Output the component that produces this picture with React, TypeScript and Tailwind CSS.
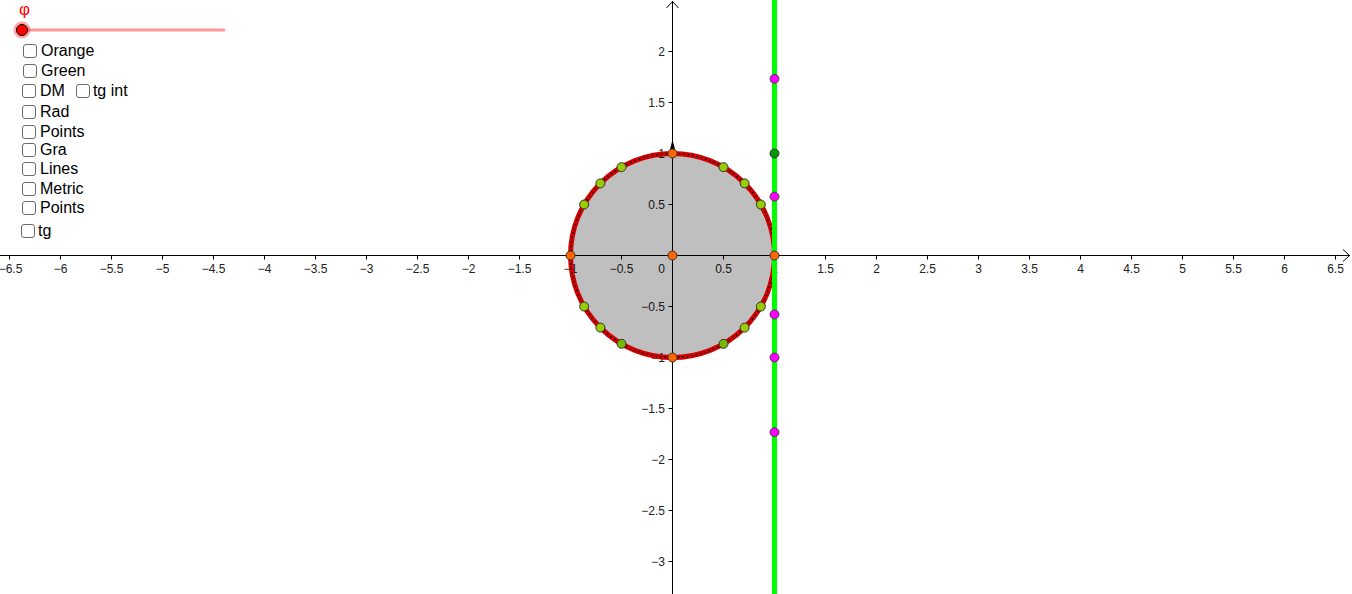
import React from 'react';

const OX = 672.5;
const OY = 255.5;
const U = 102;

const px = (x: number) => OX + x * U;
const py = (y: number) => OY - y * U;

function fmt(v: number): string {
  const s = Math.abs(v).toString();
  return v < 0 ? `\u2212${s}` : s;
}

const xTicks: number[] = [];
for (let i = -13; i <= 13; i++) if (i !== 0) xTicks.push(i / 2);
const yTicks: number[] = [];
for (let i = -6; i <= 4; i++) if (i !== 0) yTicks.push(i / 2);

const deg = Math.PI / 180;
const circlePts = [30, 45, 60, 120, 135, 150, 210, 225, 240, 300, 315, 330].map((a) => ({
  x: Math.cos(a * deg),
  y: Math.sin(a * deg),
  fill: a === 240 || a === 300 ? '#77bb00' : '#99cc00',
}));

const orangePts = [
  [0, 0],
  [1, 0],
  [-1, 0],
  [0, 1],
  [0, -1],
];

const magentaY = [Math.tan(60 * deg), Math.tan(30 * deg), -Math.tan(30 * deg), -1, -Math.tan(60 * deg)];

type Row = { label: string; extra?: string; cls: string; box: string; gap: string };

const rows: Row[] = [
  { label: 'Orange', cls: 'mt-0', box: 'ml-[23px]', gap: 'ml-[4px]' },
  { label: 'Green', cls: 'mt-0', box: 'ml-[23px]', gap: 'ml-[4px]' },
  { label: 'DM', extra: 'tg int', cls: 'mt-0', box: 'ml-[22px]', gap: 'ml-[4px]' },
  { label: 'Rad', cls: 'mt-[1px]', box: 'ml-[22px]', gap: 'ml-[4px]' },
  { label: 'Points', cls: 'mt-0', box: 'ml-[22px]', gap: 'ml-[4px]' },
  { label: 'Gra', cls: 'mt-[-2px]', box: 'ml-[22px]', gap: 'ml-[4px]' },
  { label: 'Lines', cls: 'mt-[-1px]', box: 'ml-[22px]', gap: 'ml-[4px]' },
  { label: 'Metric', cls: 'mt-0', box: 'ml-[22px]', gap: 'ml-[4px]' },
  { label: 'Points', cls: 'mt-[-1px]', box: 'ml-[22px]', gap: 'ml-[4px]' },
  { label: 'tg', cls: 'mt-[3px]', box: 'ml-[21px]', gap: 'ml-[3px]' },
];

function Box() {
  return <span className="inline-block h-[14px] w-[14px] shrink-0 rounded-[3px] border border-[#6b6b6b] bg-white" />;
}

function Graph() {
  return (
    <svg width={1352} height={594} className="block" style={{ fontFamily: '"Liberation Sans", Arial, sans-serif' }}>
      {/* axes */}
      <line x1={0} y1={OY} x2={1350} y2={OY} stroke="#000" strokeWidth={1} />
      <polyline points={`1343,249.5 1349.5,${OY} 1343,261.5`} fill="none" stroke="#000" strokeWidth={1} />
      <line x1={OX} y1={1} x2={OX} y2={594} stroke="#000" strokeWidth={1} />
      <polyline points={`666.5,8 ${OX},1.5 678.5,8`} fill="none" stroke="#000" strokeWidth={1} />
      {xTicks.map((t) => (
        <g key={`x${t}`}>
          <line x1={px(t)} y1={OY} x2={px(t)} y2={OY + 4} stroke="#000" strokeWidth={1} />
          <text x={t === -6.5 ? px(t) + 1 : px(t)} y={OY + 17} fontSize={12} textAnchor="middle" fill="#222">
            {fmt(t)}
          </text>
        </g>
      ))}
      <text x={665} y={OY + 17} fontSize={12} textAnchor="end" fill="#222">
        0
      </text>
      {yTicks.map((t) => (
        <g key={`y${t}`}>
          <line x1={OX - 4} y1={py(t)} x2={OX} y2={py(t)} stroke="#000" strokeWidth={1} />
          <text x={665} y={py(t) + 4.5} fontSize={12} textAnchor="end" fill="#222">
            {fmt(t)}
          </text>
        </g>
      ))}

      {/* unit circle */}
      <circle cx={OX} cy={OY} r={U} fill="#000" fillOpacity={0.25} stroke="#d40000" strokeWidth={5} />
      <circle cx={OX} cy={OY} r={U} fill="none" stroke="#000" strokeWidth={1.6} strokeDasharray="1.5 3" />

      {/* vector arrow */}
      <polygon points={`${OX},140 ${OX - 3.5},153 ${OX + 3.5},153`} fill="#000" />

      {/* tangent line */}
      <line x1={px(1)} y1={0} x2={px(1)} y2={594} stroke="#00ff00" strokeWidth={5} />

      {circlePts.map((p, i) => (
        <circle key={`c${i}`} cx={px(p.x)} cy={py(p.y)} r={4.5} fill={p.fill} stroke="#333" strokeWidth={1} />
      ))}
      {magentaY.map((y, i) => (
        <circle key={`m${i}`} cx={px(1)} cy={py(y)} r={4.5} fill="#ff00ff" stroke="#444" strokeWidth={1} />
      ))}
      <circle cx={px(1)} cy={py(1)} r={4.5} fill="#009900" stroke="#333" strokeWidth={1} />
      {orangePts.map(([x, y], i) => (
        <circle key={`o${i}`} cx={px(x)} cy={py(y)} r={4.5} fill="#ff6600" stroke="#333" strokeWidth={1} />
      ))}
    </svg>
  );
}

export default function App() {
  return (
    <div className="relative h-[594px] w-[1352px] overflow-hidden bg-white" style={{ fontFamily: '"Liberation Sans", Arial, sans-serif' }}>
      <Graph />
      <div className="absolute left-0 top-0 flex flex-col">
        <div className="h-[20px] pl-[19px] pt-[1px] text-[17px] leading-[17px] text-[#ff0000]">φ</div>
        <svg width={240} height={21} className="block">
          <line x1={22} y1={10} x2={224} y2={10} stroke="#ff9a9a" strokeWidth={3} strokeLinecap="round" />
          <circle cx={22} cy={10} r={8.5} fill="#ff0000" fillOpacity={0.35} />
          <circle cx={22} cy={10} r={5.5} fill="#ff0000" stroke="#000" strokeWidth={1} />
        </svg>
        {rows.map((r, i) => (
          <div key={i} className={`flex h-[20px] items-center text-[16px] leading-[20px] text-black ${r.cls}`}>
            <span className={`flex ${r.box}`}>
              <Box />
            </span>
            <span className={r.gap}>{r.label}</span>
            {r.extra && (
              <>
                <span className="ml-[11px] flex">
                  <Box />
                </span>
                <span className="ml-[3px]">{r.extra}</span>
              </>
            )}
          </div>
        ))}
      </div>
    </div>
  );
}
